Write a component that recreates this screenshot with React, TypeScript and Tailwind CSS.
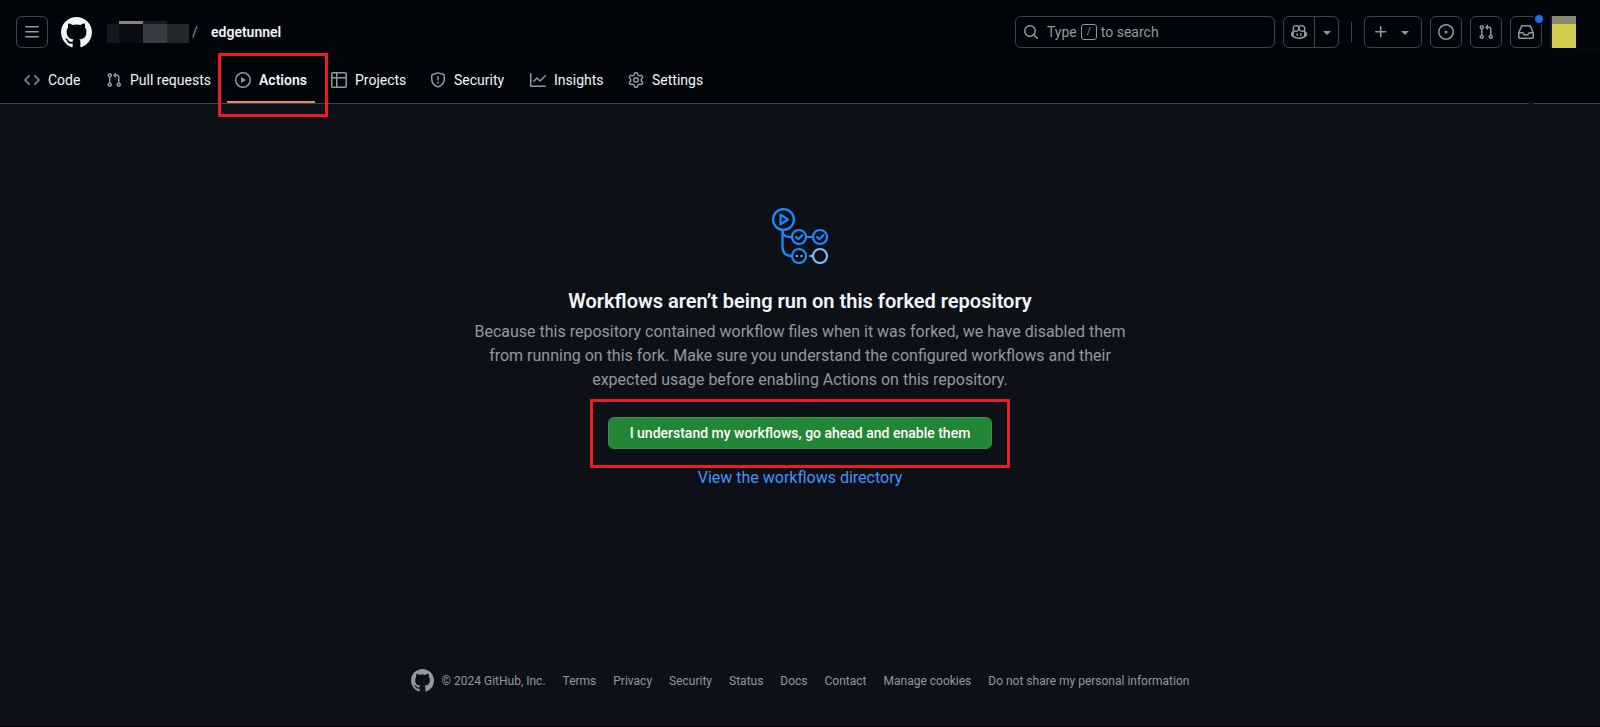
import type { ReactNode } from "react";
import clsx from "clsx";

const icons = {
  menu: "M1 2.75A.75.75 0 0 1 1.75 2h12.5a.75.75 0 0 1 0 1.5H1.75A.75.75 0 0 1 1 2.75Zm0 5A.75.75 0 0 1 1.75 7h12.5a.75.75 0 0 1 0 1.5H1.75A.75.75 0 0 1 1 7.75ZM1.75 12h12.5a.75.75 0 0 1 0 1.5H1.75a.75.75 0 0 1 0-1.5Z",
  github:
    "M8 0c4.42 0 8 3.58 8 8a8.013 8.013 0 0 1-5.45 7.59c-.4.08-.55-.17-.55-.38 0-.27.01-1.13.01-2.2 0-.75-.25-1.23-.54-1.48 1.78-.2 3.65-.88 3.65-3.95 0-.88-.31-1.59-.82-2.15.08-.2.36-1.02-.08-2.12 0 0-.67-.22-2.2.82-.64-.18-1.32-.27-2-.27-.68 0-1.36.09-2 .27-1.53-1.03-2.2-.82-2.2-.82-.44 1.1-.16 1.92-.08 2.12-.51.56-.82 1.28-.82 2.15 0 3.06 1.86 3.75 3.64 3.95-.23.2-.44.55-.51 1.07-.46.21-1.61.55-2.33-.66-.15-.24-.6-.83-1.23-.82-.67.01-.27.38.01.53.34.19.73.9.82 1.13.16.45.68 1.31 2.69.94 0 .67.01 1.3.01 1.49 0 .21-.15.45-.55.38A7.995 7.995 0 0 1 0 8c0-4.42 3.58-8 8-8Z",
  code: "m11.28 3.22 4.25 4.25a.75.75 0 0 1 0 1.06l-4.25 4.25a.749.749 0 0 1-1.275-.326.749.749 0 0 1 .215-.734L13.94 8l-3.72-3.72a.749.749 0 0 1 .326-1.275.749.749 0 0 1 .734.215Zm-6.56 0a.751.751 0 0 1 1.042.018.751.751 0 0 1 .018 1.042L2.06 8l3.72 3.72a.749.749 0 0 1-.326 1.275.749.749 0 0 1-.734-.215L.47 8.53a.75.75 0 0 1 0-1.06Z",
  pull: "M1.5 3.25a2.25 2.25 0 1 1 3 2.122v5.256a2.251 2.251 0 1 1-1.5 0V5.372A2.25 2.25 0 0 1 1.5 3.25Zm5.677-.177L9.573.677A.25.25 0 0 1 10 .854V2.5h1A2.5 2.5 0 0 1 13.5 5v5.628a2.251 2.251 0 1 1-1.5 0V5a1 1 0 0 0-1-1h-1v1.646a.25.25 0 0 1-.427.177L7.177 3.427a.25.25 0 0 1 0-.354ZM3.75 2.5a.75.75 0 1 0 0 1.5.75.75 0 0 0 0-1.5Zm0 9.5a.75.75 0 1 0 0 1.5.75.75 0 0 0 0-1.5Zm8.25.75a.75.75 0 1 0 1.5 0 .75.75 0 0 0-1.5 0Z",
  play: "M8 0a8 8 0 1 1 0 16A8 8 0 0 1 8 0ZM1.5 8a6.5 6.5 0 1 0 13 0 6.5 6.5 0 0 0-13 0Zm4.879-2.773 4.264 2.559a.25.25 0 0 1 0 .428l-4.264 2.559A.25.25 0 0 1 6 10.559V5.442a.25.25 0 0 1 .379-.215Z",
  table:
    "M0 1.75C0 .784.784 0 1.75 0h12.5C15.216 0 16 .784 16 1.75v12.5A1.75 1.75 0 0 1 14.25 16H1.75A1.75 1.75 0 0 1 0 14.25ZM6.5 6.5v8h7.75a.25.25 0 0 0 .25-.25V6.5Zm8-1.5V1.75a.25.25 0 0 0-.25-.25H6.5V5Zm-13 1.5v7.75c0 .138.112.25.25.25H5v-8ZM5 5V1.5H1.75a.25.25 0 0 0-.25.25V5Z",
  shield:
    "M7.467.133a1.748 1.748 0 0 1 1.066 0l5.25 1.68A1.75 1.75 0 0 1 15 3.48V7c0 1.566-.32 3.182-1.303 4.682-.983 1.498-2.585 2.813-5.032 3.855a1.697 1.697 0 0 1-1.33 0c-2.447-1.042-4.049-2.357-5.032-3.855C1.32 10.182 1 8.566 1 7V3.48a1.75 1.75 0 0 1 1.217-1.667Zm.61 1.429a.25.25 0 0 0-.153 0l-5.25 1.68a.25.25 0 0 0-.174.238V7c0 1.358.275 2.666 1.057 3.86.784 1.194 2.121 2.34 4.366 3.297a.196.196 0 0 0 .154 0c2.245-.956 3.582-2.104 4.366-3.298C13.225 9.666 13.5 8.36 13.5 7V3.48a.251.251 0 0 0-.174-.237l-5.25-1.68ZM8.75 4.75v3a.75.75 0 0 1-1.5 0v-3a.75.75 0 0 1 1.5 0ZM9 10.5a1 1 0 1 1-2 0 1 1 0 0 1 2 0Z",
  graph:
    "M1.5 1.75V13.5h13.75a.75.75 0 0 1 0 1.5H.75a.75.75 0 0 1-.75-.75V1.75a.75.75 0 0 1 1.5 0Zm14.28 2.53-5.25 5.25a.75.75 0 0 1-1.06 0L7 7.06 4.28 9.78a.751.751 0 0 1-1.042-.018.751.751 0 0 1-.018-1.042l3.25-3.25a.75.75 0 0 1 1.06 0L10 7.94l4.72-4.72a.751.751 0 0 1 1.042.018.751.751 0 0 1 .018 1.042Z",
  gear: "M8 0a8.2 8.2 0 0 1 .701.031C9.444.095 9.99.645 10.16 1.29l.288 1.107c.018.066.079.158.212.224.231.114.454.243.668.386.123.082.233.09.299.071l1.103-.303c.644-.176 1.392.021 1.82.63.27.385.506.792.704 1.218.315.675.111 1.422-.364 1.891l-.814.806c-.049.048-.098.147-.088.294.016.257.016.515 0 .772-.01.147.038.246.088.294l.814.806c.475.469.679 1.216.364 1.891a7.977 7.977 0 0 1-.704 1.217c-.428.61-1.176.807-1.82.63l-1.102-.302c-.067-.019-.177-.011-.3.071a5.909 5.909 0 0 1-.668.386c-.133.066-.194.158-.211.224l-.29 1.106c-.168.646-.715 1.196-1.458 1.26a8.006 8.006 0 0 1-1.402 0c-.743-.064-1.289-.614-1.458-1.26l-.289-1.106c-.018-.066-.079-.158-.212-.224a5.738 5.738 0 0 1-.668-.386c-.123-.082-.233-.09-.299-.071l-1.103.303c-.644.176-1.392-.021-1.82-.63a8.12 8.12 0 0 1-.704-1.218c-.315-.675-.111-1.422.363-1.891l.815-.806c.05-.048.098-.147.088-.294a6.214 6.214 0 0 1 0-.772c.01-.147-.038-.246-.088-.294l-.815-.806C.635 6.045.431 5.298.746 4.623a7.92 7.92 0 0 1 .704-1.217c.428-.61 1.176-.807 1.82-.63l1.102.302c.067.019.177.011.3-.071.214-.143.437-.272.668-.386.133-.066.194-.158.211-.224l.29-1.106C6.009.645 6.556.095 7.299.03 7.53.01 7.764 0 8 0Zm-.571 1.525c-.036.003-.108.036-.137.146l-.289 1.105c-.147.561-.549.967-.998 1.189-.173.086-.34.183-.5.29-.417.278-.97.423-1.529.27l-1.103-.303c-.109-.03-.175.016-.195.045-.22.312-.412.644-.573.99-.014.031-.021.11.059.19l.815.806c.411.406.562.957.53 1.456a4.709 4.709 0 0 0 0 .582c.032.499-.119 1.05-.53 1.456l-.815.806c-.081.08-.073.159-.059.19.162.346.353.677.573.989.02.03.085.076.195.046l1.102-.303c.56-.153 1.113-.008 1.53.27.161.107.328.204.501.29.447.222.85.629.997 1.189l.289 1.105c.029.109.101.143.137.146a6.6 6.6 0 0 0 1.142 0c.036-.003.108-.036.137-.146l.289-1.105c.147-.561.549-.967.998-1.189.173-.086.34-.183.5-.29.417-.278.97-.423 1.529-.27l1.103.303c.109.029.175-.016.195-.045.22-.313.411-.644.573-.99.014-.031.021-.11-.059-.19l-.815-.806c-.411-.406-.562-.957-.53-1.456a4.709 4.709 0 0 0 0-.582c-.032-.499.119-1.05.53-1.456l.815-.806c.081-.08.073-.159.059-.19a6.464 6.464 0 0 0-.573-.989c-.02-.03-.085-.076-.195-.046l-1.102.303c-.56.153-1.113.008-1.53-.27a4.44 4.44 0 0 0-.501-.29c-.447-.222-.85-.629-.997-1.189l-.289-1.105c-.029-.11-.101-.143-.137-.146a6.6 6.6 0 0 0-1.142 0ZM11 8a3 3 0 1 1-6 0 3 3 0 0 1 6 0ZM9.5 8a1.5 1.5 0 1 0-3.001.001A1.5 1.5 0 0 0 9.5 8Z",
  search:
    "M10.68 11.74a6 6 0 0 1-7.922-8.982 6 6 0 0 1 8.982 7.922l3.04 3.04a.749.749 0 0 1-.326 1.275.749.749 0 0 1-.734-.215ZM11.5 7a4.499 4.499 0 1 0-8.997 0A4.499 4.499 0 0 0 11.5 7Z",
  issue: "M8 9.5a1.5 1.5 0 1 0 0-3 1.5 1.5 0 0 0 0 3ZM8 0a8 8 0 1 1 0 16A8 8 0 0 1 8 0ZM1.5 8a6.5 6.5 0 1 0 13 0 6.5 6.5 0 0 0-13 0Z",
  plus: "M7.75 2a.75.75 0 0 1 .75.75V7h4.25a.75.75 0 0 1 0 1.5H8.5v4.25a.75.75 0 0 1-1.5 0V8.5H2.75a.75.75 0 0 1 0-1.5H7V2.75A.75.75 0 0 1 7.75 2Z",
  caret: "m4.427 7.427 3.396 3.396a.25.25 0 0 0 .354 0l3.396-3.396A.25.25 0 0 0 11.396 7H4.604a.25.25 0 0 0-.177.427Z",
  inbox:
    "M2.8 2.06A1.75 1.75 0 0 1 4.41 1h7.18c.7 0 1.333.417 1.61 1.06l2.74 6.395c.04.093.06.194.06.295v4.5A1.75 1.75 0 0 1 14.25 15H1.75A1.75 1.75 0 0 1 0 13.25v-4.5c0-.101.02-.202.06-.295Zm1.61.44a.25.25 0 0 0-.23.152L1.887 8H4.75a.75.75 0 0 1 .6.3L6.625 10h2.75l1.275-1.7a.75.75 0 0 1 .6-.3h2.863L11.82 2.652a.25.25 0 0 0-.23-.152Zm10.09 7h-2.875l-1.275 1.7a.75.75 0 0 1-.6.3h-3.5a.75.75 0 0 1-.6-.3L4.375 9.5H1.5v3.75c0 .138.112.25.25.25h12.5a.25.25 0 0 0 .25-.25Z",
  copilot:
    "M7.998 15.035c-4.562 0-7.873-2.914-7.998-3.749V9.338c.085-.628.677-1.686 1.588-2.065.013-.07.024-.143.036-.218.029-.183.06-.384.126-.612-.201-.508-.254-1.084-.254-1.656 0-.87.128-1.769.693-2.484.579-.733 1.494-1.124 2.724-1.261 1.206-.134 2.262.034 2.944.765.05.053.096.108.139.165.044-.057.094-.112.143-.165.682-.731 1.738-.899 2.944-.765 1.23.137 2.145.528 2.724 1.261.566.715.693 1.614.693 2.484 0 .572-.053 1.148-.254 1.656.066.228.098.429.126.612.012.076.024.148.037.218.924.385 1.522 1.471 1.591 2.095v1.872c0 .766-3.351 3.795-8.002 3.795Zm0-1.485c2.28 0 4.584-1.11 5.002-1.433V7.862l-.023-.116c-.49.21-1.075.291-1.727.291-1.146 0-2.059-.327-2.71-.991A3.222 3.222 0 0 1 8 6.303a3.24 3.24 0 0 1-.544.743c-.65.664-1.563.991-2.71.991-.652 0-1.236-.081-1.727-.291l-.023.116v4.255c.419.323 2.722 1.433 5.002 1.433ZM6.762 2.83c-.193-.206-.637-.413-1.682-.297-1.019.113-1.479.404-1.713.7-.247.312-.369.789-.369 1.554 0 .793.129 1.171.308 1.371.162.181.519.379 1.442.379.853 0 1.339-.235 1.638-.54.315-.322.527-.827.617-1.553.117-.935-.037-1.395-.241-1.614Zm4.155-.297c-1.044-.116-1.488.091-1.681.297-.204.219-.359.679-.242 1.614.091.726.303 1.231.618 1.553.299.305.784.54 1.638.54.922 0 1.28-.198 1.442-.379.179-.2.308-.578.308-1.371 0-.765-.123-1.242-.37-1.554-.233-.296-.693-.587-1.713-.7ZM6.25 9.037a.75.75 0 0 1 .75.75v1.501a.75.75 0 0 1-1.5 0V9.787a.75.75 0 0 1 .75-.75Zm4.25.75v1.501a.75.75 0 0 1-1.5 0V9.787a.75.75 0 0 1 1.5 0Z",
};

const Icon = ({ name, className = "size-4" }: { name: keyof typeof icons; className?: string }) => (
  <svg viewBox="0 0 16 16" fill="currentColor" aria-hidden="true" className={clsx("shrink-0", className)}>
    <path d={icons[name]} />
  </svg>
);

const IconButton = ({ label, className, children }: { label: string; className?: string; children: ReactNode }) => (
  <button
    type="button"
    aria-label={label}
    className={clsx(
      "relative flex h-8 shrink-0 items-center justify-center rounded-md border border-[#3d444d] text-[#9198a1]",
      className ?? "w-8",
    )}
  >
    {children}
  </button>
);

const tabs: { label: string; icon: keyof typeof icons; width: string; active?: boolean }[] = [
  { label: "Code", icon: "code", width: "w-[74px]" },
  { label: "Pull requests", icon: "pull", width: "w-[121px]" },
  { label: "Actions", icon: "play", width: "w-[88px]", active: true },
  { label: "Projects", icon: "table", width: "w-[91px]" },
  { label: "Security", icon: "shield", width: "w-[92px]" },
  { label: "Insights", icon: "graph", width: "w-[90px]" },
  { label: "Settings", icon: "gear", width: "w-[92px]" },
];

const footerLinks = [
  "Terms",
  "Privacy",
  "Security",
  "Status",
  "Docs",
  "Contact",
  "Manage cookies",
  "Do not share my personal information",
];

// Owner name is masked out with flat blocks
const MaskedOwner = () => (
  <div className="flex h-[22px] items-end">
    <span className="h-[19px] w-3 bg-[#14171e]" />
    <span className="h-[22px] w-6 border-t-3 border-[#898483] bg-[#0a0d11]" />
    <span className="h-[22px] w-6 border-t-3 border-[#161a21] bg-[#383d44]" />
    <span className="h-[19px] w-[22px] bg-[#242628]" />
  </div>
);

const Header = () => (
  <header className="relative bg-[#010409]">
    <div className="flex items-center pt-4 pr-6 pl-4">
      <IconButton label="Open menu">
        <Icon name="menu" />
      </IconButton>
      <a href="#" aria-label="Homepage" className="ml-[13px] text-[#f0f6fc]">
        <Icon name="github" className="size-[31px]" />
      </a>
      <div className="ml-[15px] flex items-center text-sm">
        <MaskedOwner />
        <span className="w-[22px] pl-[3px] text-[#9198a1]">/</span>
        <a href="#" className="font-semibold text-[#f0f6fc]">
          edgetunnel
        </a>
      </div>

      <div className="ml-auto flex items-center">
        <button
          type="button"
          className="flex h-8 w-[260px] items-center rounded-md border border-[#3d444d] pl-[7px] text-sm text-[#9198a1]"
        >
          <Icon name="search" />
          <span className="ml-2">Type</span>
          <kbd className="mx-1 flex size-4 items-center justify-center rounded-[3px] border border-[#9198a1] font-['Roboto',sans-serif] text-[10px]">
            /
          </kbd>
          <span>to search</span>
        </button>
        <div className="ml-2 flex h-8 w-14 rounded-md border border-[#3d444d] text-[#9198a1]">
          <button type="button" aria-label="Chat with Copilot" className="flex flex-1 items-center justify-center">
            <Icon name="copilot" />
          </button>
          <button
            type="button"
            aria-label="More Copilot options"
            className="flex w-6 items-center justify-center border-l border-[#3d444d]"
          >
            <Icon name="caret" />
          </button>
        </div>
        <span className="mx-3 h-5 w-px bg-[#3d444d]" />
        <IconButton label="Create new" className="w-[58px] gap-2">
          <Icon name="plus" />
          <Icon name="caret" />
        </IconButton>
        <div className="ml-2 flex gap-2">
          <IconButton label="Issues">
            <Icon name="issue" />
          </IconButton>
          <IconButton label="Pull requests">
            <Icon name="pull" />
          </IconButton>
          <IconButton label="Notifications">
            <Icon name="inbox" />
            <span className="absolute -top-1 -right-1 size-3 rounded-full border-2 border-[#010409] bg-[#1f6feb]" />
          </IconButton>
          <button
            type="button"
            aria-label="Account"
            className="relative h-8 w-[26px] border-l-2 border-[#141c2b] bg-[#d2cf50]"
          >
            <span className="absolute inset-x-0 top-0 h-2 bg-[#898670]" />
            <span className="absolute top-full left-full h-1 w-6 bg-[#06090d]" />
          </button>
        </div>
      </div>
    </div>

    <nav aria-label="Repository" className="mt-2 h-12 border-b border-[#3d444d] px-4 pt-2">
      <ul className="flex h-full gap-2">
        {tabs.map((tab) => (
          <li key={tab.label} className={clsx("relative h-full shrink-0", tab.width)}>
            <a
              href="#"
              className={clsx(
                "flex h-8 items-center gap-2 pl-2 text-sm whitespace-nowrap text-[#f0f6fc]",
                tab.active && "font-semibold",
              )}
            >
              <Icon name={tab.icon} className="size-4 text-[#9198a1]" />
              {tab.label}
            </a>
            {tab.active && (
              <>
                <span className="absolute inset-x-0 bottom-0 h-0.5 bg-[#f78166]" />
                <span className="absolute -top-[11px] -right-[13px] -bottom-[14px] -left-[9px] z-10 border-3 border-[#ed1c24]" />
              </>
            )}
          </li>
        ))}
      </ul>
    </nav>
    <span className="absolute right-[67px] bottom-0 h-[3px] w-1 bg-[#0b0e14]" />
  </header>
);

const WorkflowArt = () => (
  <svg viewBox="0 0 56 56" fill="none" stroke="#2088ff" strokeWidth="2.2" className="size-14" aria-hidden="true">
    <circle cx="11.5" cy="11.5" r="10.4" />
    <path d="M8.5 6.8v9.4l7.5-4.7z" strokeLinejoin="round" />
    <path d="M10.5 22v16.5Q10.5 48 20 48M10.5 22q0 7 7 7H20M34 29h7" />
    <circle cx="27" cy="29" r="7" />
    <circle cx="48" cy="29" r="7" />
    <circle cx="27" cy="48" r="7" />
    <path d="m24 29 2.3 2.2 4-4M45 29l2.3 2.2 4-4" strokeLinecap="round" strokeLinejoin="round" />
    <path d="M23.8 48h2M28.4 48h2" stroke="#79b8ff" />
    <circle cx="48" cy="48" r="7" stroke="#79b8ff" />
    <path d="M37.5 48H41" stroke="#79b8ff" />
  </svg>
);

const App = () => {
  return (
    <div className="flex min-h-screen flex-col border-b border-black bg-[#0d1117] font-['Roboto','Liberation_Sans',sans-serif] text-[#f0f6fc]">
      <Header />

      <main className="flex flex-1 flex-col items-center px-4 pt-26 text-center">
        <WorkflowArt />
        <h1 className="mt-[22px] text-xl leading-[30px] font-semibold">
          Workflows aren’t being run on this forked repository
        </h1>
        <p className="mt-1 max-w-[680px] text-base text-[#9198a1]">
          Because this repository contained workflow files when it was forked, we have disabled them from running on
          this fork. Make sure you understand the configured workflows and their expected usage before enabling Actions
          on this repository.
        </p>
        <div className="mt-[7px] -mb-0.5 border-3 border-[#ed1c24] px-[15px] pt-[15px] pb-4">
          <button
            type="button"
            className="h-8 rounded-md border border-[#399049] bg-[#238636] px-[21px] text-sm font-medium text-white"
          >
            I understand my workflows, go ahead and enable them
          </button>
        </div>
        <a href="#" className="text-base text-[#4493f8]">
          View the workflows directory
        </a>
      </main>

      <footer className="flex items-center justify-center px-4 pt-10 pb-[34px] text-xs text-[#9198a1]">
        <Icon name="github" className="size-[23px]" />
        <span className="ml-2">© 2024 GitHub, Inc.</span>
        <ul className="ml-[17px] flex gap-[17px]">
          {footerLinks.map((link) => (
            <li key={link}>
              <a href="#">{link}</a>
            </li>
          ))}
        </ul>
      </footer>
    </div>
  );
};

export default App;
